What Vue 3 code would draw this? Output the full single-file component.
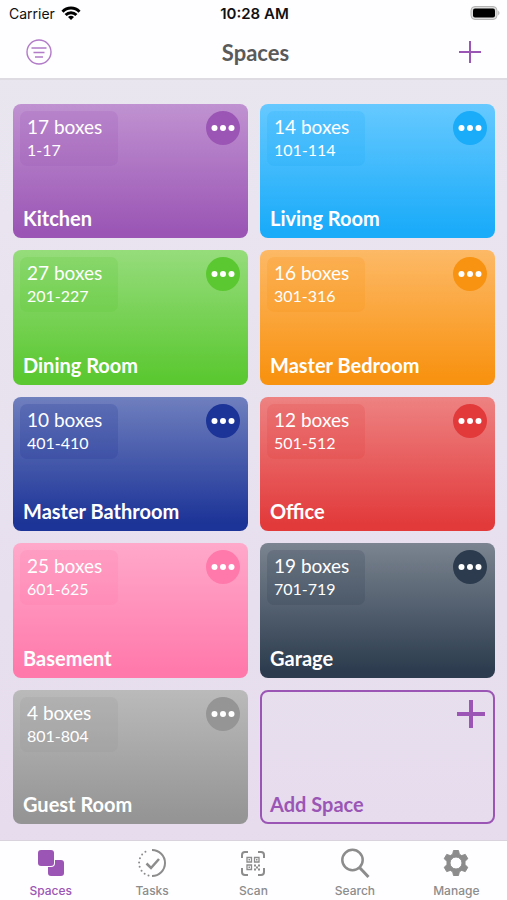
<script setup>
import { ref } from "vue";

const spaces = [
	{ name: "Kitchen", count: 17, range: "1-17", top: "#c092d1", bottom: "#9b56b5" },
	{ name: "Living Room", count: 14, range: "101-114", top: "#66c9ff", bottom: "#1aabf9" },
	{ name: "Dining Room", count: 27, range: "201-227", top: "#96dc7c", bottom: "#5bc831" },
	{ name: "Master Bedroom", count: 16, range: "301-316", top: "#fdb966", bottom: "#f89211" },
	{ name: "Master Bathroom", count: 10, range: "401-410", top: "#6f7fbe", bottom: "#1c3397" },
	{ name: "Office", count: 12, range: "501-512", top: "#ee8282", bottom: "#e23a3b" },
	{ name: "Basement", count: 25, range: "601-625", top: "#ffa9ca", bottom: "#ff79ab" },
	{ name: "Garage", count: 19, range: "701-719", top: "#7b8490", bottom: "#2c3c4e" },
	{ name: "Guest Room", count: 4, range: "801-804", top: "#bababa", bottom: "#959595" },
];

const tabs = ["Spaces", "Tasks", "Scan", "Search", "Manage"];
const active = ref("Spaces");
</script>

<template>
	<div class="app">
		<header class="top">
			<div class="status">
				<div class="carrier">
					<span>Carrier</span>
					<svg width="20" height="15" viewBox="0 0 20 15" fill="none" stroke="#000" stroke-width="3">
						<path d="M1.5 5.7C6.2.9 13.8.9 18.5 5.7" />
						<path d="M4.6 9C7.6 6 12.4 6 15.4 9" />
						<path d="M7 10.9q3-2.2 6 0L10 14z" fill="#000" stroke="none" />
					</svg>
				</div>
				<span class="time">10:28 AM</span>
				<svg class="battery" width="31" height="16" viewBox="0 0 31 16">
					<rect x="2" y="1.5" width="26" height="13" rx="4" fill="#ddd" stroke="#b4b4b4" />
					<rect x="4" y="3.5" width="22" height="9" rx="2" fill="#000" />
					<path d="M29.200 5.500q2.600 2.500 0 5z" fill="#b4b4b4" />
				</svg>
			</div>
			<div class="navbar">
				<button class="icon-btn" aria-label="Sort spaces">
					<svg width="26" height="26" viewBox="0 0 26 26" fill="none" stroke="#b27bc8" stroke-width="1.4">
						<circle cx="13" cy="13" r="12" />
						<path d="M5.500 9h15M7.500 13.500h11M9 18h8" />
					</svg>
				</button>
				<h1>Spaces</h1>
				<button class="icon-btn" aria-label="Add a space">
					<svg width="22" height="22" viewBox="0 0 22 22" fill="none" stroke="#9b56b5" stroke-width="2">
						<path d="M11 0v22M0 11h22" />
					</svg>
				</button>
			</div>
		</header>

		<main class="grid">
			<section v-for="space in spaces" :key="space.name" class="card"
				:style="{ '--top': space.top, '--bottom': space.bottom }">
				<div class="card-head">
					<div class="info">
						<p class="count">{{ space.count }} boxes</p>
						<p class="range">{{ space.range }}</p>
					</div>
					<button class="more" :aria-label="space.name + ' options'">
						<svg width="24" height="6" viewBox="0 0 24 6" fill="#fff">
							<circle cx="3.500" cy="3" r="3" />
							<circle cx="12" cy="3" r="3" />
							<circle cx="20.500" cy="3" r="3" />
						</svg>
					</button>
				</div>
				<h2>{{ space.name }}</h2>
			</section>
			<button class="card add">
				<svg width="28" height="28" viewBox="0 0 28 28" fill="none" stroke="#9b56b5" stroke-width="4">
					<path d="M14 0v28M0 14h28" />
				</svg>
				<span>Add Space</span>
			</button>
		</main>

		<nav class="tabs">
			<button v-for="tab in tabs" :key="tab" class="tab" :class="{ active: active === tab }" @click="active = tab">
				<svg v-if="tab === 'Spaces'" width="32" height="32" viewBox="0 0 32 32" fill="currentColor">
					<rect x="13" y="13" width="16" height="16" rx="3" />
					<rect x="2" y="2" width="18" height="18" rx="4" fill="#fefdff" />
					<rect x="3" y="3" width="16" height="16" rx="3" />
				</svg>
				<svg v-else-if="tab === 'Tasks'" width="32" height="32" viewBox="0 0 32 32" fill="none"
					stroke="currentColor" stroke-width="2">
					<path d="M16 3a13 13 0 0 1 0 26" />
					<path d="M12.500 28.500a13 13 0 0 1 0-25" stroke-linecap="round" stroke-dasharray="0 4.300" />
					<path d="m10.500 16.500 4.500 4.500 8-9" stroke-width="2.500" />
				</svg>
				<svg v-else-if="tab === 'Scan'" width="32" height="32" viewBox="0 0 32 32" fill="none"
					stroke="currentColor" stroke-width="2">
					<path d="M5 11V8q0-3 3-3h3M21 5h3q3 0 3 3v3M27 21v4q0 3-3 3h-3M11 28H8q-3 0-3-3v-4" />
					<path d="M10 10.500h4.500v4.500h-4.500zM17.500 10.500h4.500v4.500h-4.500zM10 18h4.500v4.500h-4.500z" stroke-width="1.300" />
					<path d="M11.500 12h1.500v1.500h-1.500zM19 12h1.500v1.500h-1.500zM11.500 19.500h1.500v1.500h-1.500zM17 17.500h2v2h-2zM19 19.500h2v2h-2zM21 17.500h2v2h-2zM17 21.500h2v2h-2zM21 21.500h2v2h-2z"
						fill="currentColor" stroke="none" />
				</svg>
				<svg v-else-if="tab === 'Search'" width="32" height="32" viewBox="0 0 32 32" fill="none"
					stroke="currentColor" stroke-width="2.500">
					<circle cx="13.500" cy="13" r="10.200" />
					<path d="m20.500 20.500 9 9.500" stroke-width="3" />
				</svg>
				<svg v-else width="32" height="32" viewBox="0 0 32 32" fill="currentColor">
					<path fill-rule="evenodd" stroke="currentColor" stroke-linejoin="round"
						d="M13.500 3.500h5l.8 3.700 2.400 1.400 3.600-1.200 2.500 4.300-2.800 2.600v3.400l2.800 2.600-2.500 4.300-3.600-1.200-2.400 1.400-.8 3.700h-5l-.8-3.700-2.400-1.400-3.600 1.200-2.500-4.300 2.800-2.600v-3.400l-2.800-2.600 2.500-4.300 3.600 1.200 2.400-1.400zM16 10a6 6 0 1 0 0 12 6 6 0 0 0 0-12z" />
				</svg>
				<span>{{ tab }}</span>
			</button>
		</nav>
	</div>
</template>

<style>
body {
	margin: 0;
}
</style>

<style scoped>
.app {
	display: flex;
	flex-direction: column;
	min-height: 100vh;
	background: linear-gradient(#eae7f0, #e6dbed);
	font-family: Lato, sans-serif;
}

button {
	border: 0;
	padding: 0;
	background: none;
	font-family: inherit;
	cursor: pointer;
}

svg {
	display: block;
}

.top {
	background: #fefdff;
	border-bottom: 2px solid #dedbe2;
}

.status {
	display: grid;
	grid-template-columns: 1fr auto 1fr;
	align-items: center;
	height: 26px;
	padding: 0 7px 0 9px;
	font-family: Inter, sans-serif;
	font-size: 14px;
	color: #111;
}

.carrier {
	display: flex;
	align-items: center;
	gap: 6px;
}

.time {
	font-size: 15px;
	font-weight: 600;
}

.battery {
	justify-self: end;
}

.navbar {
	display: flex;
	align-items: center;
	justify-content: space-between;
	height: 52px;
	padding: 0 26px;
}

h1 {
	margin: 0;
	font-size: 22px;
	font-weight: 700;
	color: #5a5a5a;
}

.grid {
	flex: 1;
	display: grid;
	grid-template-columns: 1fr 1fr;
	grid-auto-rows: minmax(130px, 1fr);
	gap: 12px;
	padding: 24px 12px 16px 13px;
}

.card {
	display: flex;
	flex-direction: column;
	justify-content: space-between;
	box-sizing: border-box;
	padding: 7px 8px 8px 7px;
	border-radius: 8px;
	background: linear-gradient(var(--top), var(--bottom) 95%);
	color: #fff;
}

.card-head {
	display: flex;
	align-items: flex-start;
	justify-content: space-between;
}

.info {
	box-sizing: border-box;
	min-width: 98px;
	height: 55px;
	padding: 4px 7px;
	border-radius: 7px;
	background: color-mix(in srgb, var(--bottom) 20%, transparent);
}

.info p {
	margin: 0;
}

.count {
	font-size: 19px;
	line-height: 24px;
}

.range {
	font-size: 16px;
	line-height: 22px;
}

.more {
	display: grid;
	place-items: center;
	width: 34px;
	height: 34px;
	border-radius: 50%;
	background: var(--bottom);
}

h2,
.add span {
	margin: 0;
	padding-left: 3px;
	font-size: 20px;
	font-weight: 700;
	line-height: 24px;
}

.add {
	padding: 8px 8px 6px 5px;
	border: 2px solid #9b56b5;
	background: none;
	color: #9b56b5;
	text-align: left;
}

.add svg {
	align-self: flex-end;
}

.tabs {
	display: grid;
	grid-template-columns: repeat(5, 1fr);
	box-sizing: border-box;
	height: 60px;
	border-top: 1px solid #d8d3dc;
	background: #fefdff;
}

.tab {
	display: flex;
	flex-direction: column;
	align-items: center;
	padding-top: 6px;
	color: #8c8c8c;
	font-family: Inter, sans-serif;
	font-size: 12px;
	font-weight: 500;
	line-height: 24px;
}

.tab.active {
	color: #9b56b5;
}
</style>
